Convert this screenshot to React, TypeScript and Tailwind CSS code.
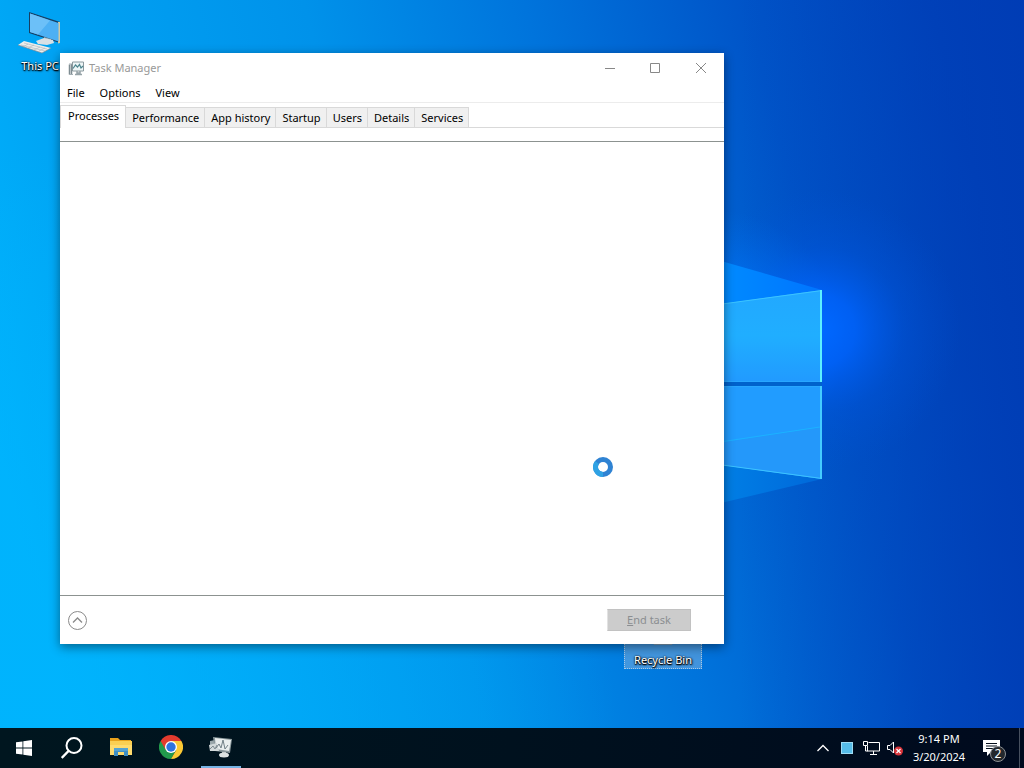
import { useState } from "react";
import type { ReactNode } from "react";

const TABS = ["Processes", "Performance", "App history", "Startup", "Users", "Details", "Services"];
const MENUS = ["File", "Options", "View"];

function Wallpaper() {
  return (
    <svg
      className="absolute inset-0 h-full w-full"
      viewBox="0 0 1024 768"
      preserveAspectRatio="xMidYMid slice"
      aria-hidden="true"
    >
      <defs>
        <linearGradient id="sky" gradientUnits="userSpaceOnUse" x1="-110" y1="16" x2="980" y2="-260">
          <stop offset="0" stopColor="#00b2fc" />
          <stop offset="0.12" stopColor="#00a4f4" />
          <stop offset="0.36" stopColor="#0092ea" />
          <stop offset="0.55" stopColor="#0074dc" />
          <stop offset="0.74" stopColor="#0054c8" />
          <stop offset="0.9" stopColor="#0044bc" />
          <stop offset="1" stopColor="#003eb8" />
        </linearGradient>
        <linearGradient id="shade" gradientUnits="userSpaceOnUse" x1="740" y1="0" x2="1024" y2="0">
          <stop offset="0" stopColor="#003cb4" stopOpacity="0" />
          <stop offset="0.5" stopColor="#003cb4" stopOpacity="0.3" />
          <stop offset="1" stopColor="#003cb4" stopOpacity="0.8" />
        </linearGradient>
        <radialGradient id="corner" gradientUnits="userSpaceOnUse" cx="0" cy="768" r="620">
          <stop offset="0" stopColor="#00b4fd" stopOpacity="0.9" />
          <stop offset="1" stopColor="#00b4fd" stopOpacity="0" />
        </radialGradient>
        <radialGradient id="glow" gradientUnits="userSpaceOnUse" cx="820" cy="330" r="140">
          <stop offset="0" stopColor="#0068ff" />
          <stop offset="0.25" stopColor="#0064ff" stopOpacity="0.8" />
          <stop offset="0.6" stopColor="#005ae8" stopOpacity="0.3" />
          <stop offset="1" stopColor="#0054d8" stopOpacity="0" />
        </radialGradient>
        <radialGradient id="glowLeft" gradientUnits="userSpaceOnUse" cx="715" cy="340" r="130">
          <stop offset="0" stopColor="#0090ff" />
          <stop offset="0.5" stopColor="#0080ff" stopOpacity="0.6" />
          <stop offset="1" stopColor="#0070e8" stopOpacity="0" />
        </radialGradient>
        <linearGradient id="beamTop" x1="0" y1="0" x2="1" y2="0">
          <stop offset="0" stopColor="#0090ff" />
          <stop offset="1" stopColor="#0074ff" />
        </linearGradient>
        <linearGradient id="beamBottom" x1="0" y1="0" x2="1" y2="0">
          <stop offset="0" stopColor="#0084e8" />
          <stop offset="1" stopColor="#0068da" />
        </linearGradient>
        <linearGradient id="paneTop" x1="0" y1="0" x2="0" y2="1">
          <stop offset="0" stopColor="#22a8ff" />
          <stop offset="0.5" stopColor="#20aeff" />
          <stop offset="1" stopColor="#219aff" />
        </linearGradient>
      </defs>
      <rect width="1024" height="768" fill="url(#sky)" />
      <rect width="1024" height="768" fill="url(#corner)" />
      <rect width="1024" height="768" fill="url(#shade)" />
      <rect width="1024" height="768" fill="url(#glowLeft)" />
      <rect width="1024" height="768" fill="url(#glow)" />
      <path d="M700 255 822 290 700 308Z" fill="url(#beamTop)" />
      <path d="M700 462 822 479 700 508Z" fill="url(#beamBottom)" />
      <path d="M700 380h122v8H700z" fill="#0062cc" />
      <path d="M700 307 822 290v92H700z" fill="url(#paneTop)" />
      <path d="M700 386h122v93l-122-17z" fill="#219cff" />
      <path d="M700 446 822 427v52l-122-17z" fill="#2498fa" />
      <path d="M700 445 820 427" stroke="#1cb2ff" />
      <path d="M700 307 822 290.500M700 462l122 16.500" fill="none" stroke="#3cc4ff" />
      <path d="M700 381.500h120M700 386.500h120" stroke="#28a6ff" />
      <path d="M821 290v92" stroke="#5cf0ff" strokeWidth="2" />
      <path d="M821 386v93" stroke="#44ccff" strokeWidth="2" />
    </svg>
  );
}

function PcIcon() {
  return (
    <svg width="44" height="42" viewBox="0 0 44 42" aria-hidden="true">
      <path d="M11 0 42 10v21L11 21z" fill="#173f63" />
      <path d="M42 10v21l-2 .5V10z" fill="#cfc9a6" />
      <path d="M12 1.500 40.500 11v18.500L12 20z" fill="#4db0f4" />
      <path d="M12 1.500 32 8.500 20 22.500 12 20z" fill="#6cc0f8" />
      <path d="m26 25 7 2v3l-7-1z" fill="#90a7b5" />
      <path d="m18 29 8-3 9 2 1 3-7 2-9-1z" fill="#d8e0e5" />
      <path d="m0 33 6-4 27 7-9 5z" fill="#ededeb" />
      <path d="m3 33 24 6M6 31l23 6M10 32l-5 3M16 33l-6 3M22 35l-6 3M27 36l-6 3" stroke="#a9b3ba" strokeWidth=".6" />
      <path d="m0 33 24 8 9-5" fill="none" stroke="#7c8b96" strokeWidth=".7" />
    </svg>
  );
}

function BinIcon() {
  return (
    <svg width="36" height="40" viewBox="0 0 36 44" aria-hidden="true">
      <path d="M4 6h28l-4 36H8z" fill="#dfe7ec" stroke="#8d9ba5" />
      <path d="M4 6 18 1l14 5-14 4z" fill="#f5f8fa" stroke="#8d9ba5" />
    </svg>
  );
}

function TitleIcon() {
  return (
    <svg width="17" height="16" viewBox="0 0 17 16" fill="none" aria-hidden="true">
      <path d="M1.500 4.500v10M3.500 4v10" stroke="#7e8c92" strokeWidth="1.500" />
      <path d="M1 4h3M1 14.500h4" stroke="#a4afb4" />
      <path d="M4.500 2h11v9h-11z" fill="#edf5f6" stroke="#8b999e" />
      <path d="M5 8.500 7.500 5 9.500 7l2-2.500L13 8l2-2" stroke="#4e858e" strokeWidth="1.200" />
      <path d="M9 11v2h3v-2M7 14.500h7" stroke="#96a3a8" strokeWidth="1.500" />
    </svg>
  );
}

function FolderIcon() {
  return (
    <svg width="22" height="18" viewBox="0 0 22 18" aria-hidden="true">
      <path d="M0 0h8l2 2h11v4H0z" fill="#e8a21c" />
      <path d="M0 3h22v14H0z" fill="#ffdb6e" />
      <path d="M0 3h22v4H0z" fill="#fbcf53" />
      <path d="M4 10h14v8h-4v-4H8v4H4z" fill="#3f8fc4" />
      <path d="M4 10h14v3H4z" fill="#55a2d2" />
    </svg>
  );
}

function ChromeIcon() {
  return (
    <svg width="24" height="24" viewBox="0 0 24 24" aria-hidden="true">
      <path d="M1.600 6A12 12 0 0 0 12 24l5.200-9L12 12Z" fill="#229a4c" />
      <path d="M22.400 6A12 12 0 0 1 12 24l5.200-9L12 6Z" fill="#fcc934" />
      <path d="M12 6h10.400A12 12 0 0 0 1.600 6l5.200 9Z" fill="#e33b2e" />
      <circle cx="12" cy="12" r="6" fill="#fff" />
      <circle cx="12" cy="12" r="4.700" fill="#2f73e0" />
    </svg>
  );
}

function TaskManagerIcon() {
  return (
    <svg width="24" height="22" viewBox="0 0 24 22" aria-hidden="true">
      <path d="m1 5 5-1v11H1z" fill="#9aa7ab" />
      <path d="m4 1 19 2-2 14-15-2z" fill="#8a989c" />
      <path d="m6 2 16 2-2 11-13-2z" fill="#e9eeee" />
      <path d="m0 9 8-2 2 8H1z" fill="#d3dadb" />
      <path d="m7 12 3-4 2 4 2-8 2 9 3-4" fill="none" stroke="#718087" />
      <path d="m1 13 3-3 2 3 2-4" fill="none" stroke="#7d8b91" />
      <path d="M13 16h4v3h-4z" fill="#b7c0c2" />
      <ellipse cx="15" cy="19" rx="5" ry="2.500" fill="#dde2e2" />
    </svg>
  );
}

function DesktopIcon({ label, children, className }: { label: string; children: ReactNode; className: string }) {
  return (
    <button
      className={
        "absolute flex flex-col items-center leading-4 text-white [text-shadow:1px_1px_2px_#000,0_1px_1px_#000,0_0_2px_#000] " +
        className
      }
    >
      {children}
      <span className="whitespace-nowrap">{label}</span>
    </button>
  );
}

function TaskManager() {
  const [tab, setTab] = useState("Processes");

  return (
    <section
      aria-label="Task Manager"
      className="absolute top-[53px] right-[300px] bottom-[84px] left-[60px] flex flex-col bg-white shadow-[0_3px_10px_rgba(0,0,0,0.45)]"
    >
      <header className="flex h-[30px] shrink-0 items-center pl-2 text-[#999]">
        <TitleIcon />
        <h1 className="ml-1 flex-1">Task Manager</h1>
        <div className="flex h-7">
          <button aria-label="Minimize" className="flex w-[45px] items-center justify-center">
            <svg width="10" height="10" stroke="#888"><path d="M0 5.500h10" /></svg>
          </button>
          <button aria-label="Maximize" className="flex w-[46px] items-center justify-center">
            <svg width="10" height="10" fill="none" stroke="#888"><path d="M.5.500h9v9h-9z" /></svg>
          </button>
          <button aria-label="Close" className="flex w-[46px] items-center justify-center">
            <svg width="10" height="10" stroke="#888"><path d="m0 0 10 10M10 0 0 10" /></svg>
          </button>
        </div>
      </header>

      <nav className="flex h-5 shrink-0 items-center gap-[15px] border-b border-[#ececec] pt-0.5 pl-[7px] text-black">
        {MENUS.map((m) => (
          <button key={m}>{m}</button>
        ))}
      </nav>

      <div role="tablist" className="flex h-[25px] shrink-0 items-end border-b border-[#d9d9d9] text-black">
        {TABS.map((t) => (
          <button
            key={t}
            role="tab"
            aria-selected={t === tab}
            onClick={() => setTab(t)}
            className={
              t === tab
                ? "-mb-px h-[23px] border-x border-t border-[#d9d9d9] bg-white pr-1.5 pb-0.5 pl-[7px]"
                : "h-5 border-t border-r border-[#d9d9d9] bg-[#f0f0f0] pt-px pr-[5px] pl-1.5"
            }
          >
            {t}
          </button>
        ))}
      </div>

      <div role="tabpanel" aria-label={tab} className="mt-[13px] min-h-0 flex-1 border-y border-[#8c9290]" />

      <footer className="flex h-12 shrink-0 items-center justify-between pr-[33px] pl-2">
        <button aria-label="Fewer details">
          <svg width="19" height="19" viewBox="0 0 19 19" fill="none" stroke="#8a8a8a">
            <circle cx="9.500" cy="9.500" r="9" />
            <path d="m5 11.500 4.500-4.500 4.500 4.500" strokeWidth="1.300" />
          </svg>
        </button>
        <button
          disabled
          className="h-[22px] w-[84px] border border-[#c2c2c2] border-l-[#e2e2e2] bg-[#cccccc] text-[#8b8e91]"
        >
          <span className="underline">E</span>nd task
        </button>
      </footer>
    </section>
  );
}

function TaskButton({ label, active, children }: { label: string; active?: boolean; children: ReactNode }) {
  return (
    <button aria-label={label} className="flex w-[50px] justify-center">
      <span
        className={
          "flex h-full w-10 items-center justify-center border-b-2 " +
          (active ? "border-[#76b3e4]" : "border-transparent")
        }
      >
        {children}
      </span>
    </button>
  );
}

function Taskbar() {
  return (
    <footer className="relative flex h-10 shrink-0 bg-linear-to-r from-[#00161f] via-[#00111e] to-[#000a1e] text-white">
      <button aria-label="Start" className="flex w-12 items-center justify-center">
        <svg width="16" height="16" viewBox="0 0 16 16" fill="#fff">
          <path d="M0 2.300 6.500 1.400v6.200H0zM7.300 1.200 16 0v7.600H7.300zM0 8.400h6.500v6.200L0 13.700zM7.300 8.400H16V16l-8.700-1.200z" />
        </svg>
      </button>
      <button aria-label="Search" className="flex w-12 items-center justify-center">
        <svg width="22" height="22" viewBox="0 0 22 22" fill="none" stroke="#fff" strokeWidth="2">
          <circle cx="13" cy="8.500" r="7.500" />
          <path d="M7.500 14 .700 21" strokeWidth="2.500" />
        </svg>
      </button>
      <TaskButton label="File Explorer"><FolderIcon /></TaskButton>
      <TaskButton label="Google Chrome"><ChromeIcon /></TaskButton>
      <TaskButton label="Task Manager" active><TaskManagerIcon /></TaskButton>

      <div className="ml-auto flex">
        <button aria-label="Show hidden icons" className="flex w-6 items-center justify-center">
          <svg width="12" height="8" fill="none" stroke="#fff" strokeWidth="1.300"><path d="M.5 7 6 1.500 11.500 7" /></svg>
        </button>
        <button aria-label="Tray app" className="flex w-6 items-center justify-center">
          <span className="size-3 border border-[#9fdcf4] bg-[#56bce8]" />
        </button>
        <button aria-label="Network" className="flex w-6 items-center justify-center">
          <svg width="17" height="14" viewBox="0 0 17 14" fill="none" stroke="#fff">
            <path d="M5.500 1.500h11v8.500h-12V5M10.500 10v3M7 13.500h7" />
            <path d="M.5.500h4v4h-4zM2.500 4.500V10H5" />
          </svg>
        </button>
        <button aria-label="Volume muted" className="flex w-6 items-center justify-center">
          <svg width="17" height="16" viewBox="0 0 17 16" fill="none">
            <path d="M.5 5.500H3L6.500 2v11L3 9.500H.5z" stroke="#fff" />
            <circle cx="11.500" cy="11" r="4.500" fill="#d8343a" />
            <path d="m9.500 9 4 4m0-4-4 4" stroke="#fff" strokeWidth="1.200" />
          </svg>
        </button>
        <button className="flex w-16 flex-col items-center justify-center leading-[18px]">
          <span>9:14 PM</span>
          <span>3/20/2024</span>
        </button>
        <button aria-label="Notifications" className="relative flex w-12 items-center justify-center pr-2">
          <svg width="17" height="16" viewBox="0 0 17 16">
            <path d="M0 0h17v12H8l-4 4v-4H0z" fill="#fff" />
            <path d="M3 3.500h11M3 6h11M3 8.500h8" stroke="#06101c" />
          </svg>
          <span className="absolute top-[18px] left-[19px] flex size-4 items-center justify-center rounded-full border border-[#8c9094] bg-[#23282d] text-xs">
            2
          </span>
        </button>
        <button aria-label="Show desktop" className="w-[5px] border-l border-[#47505f]" />
      </div>
    </footer>
  );
}

export default function App() {
  return (
    <div className="relative flex h-screen flex-col overflow-hidden bg-[#0078d7] font-['Noto_Sans','Open_Sans',sans-serif] text-[11px]">
      <Wallpaper />
      <main className="relative flex-1">
        <DesktopIcon label="This PC" className="top-3 left-[18px] w-11 gap-1">
          <PcIcon />
        </DesktopIcon>
        <DesktopIcon
          label="Recycle Bin"
          className="right-[322px] bottom-[59px] w-[78px] gap-1.5 border border-dotted border-[#a8c8e4] bg-[#5ea2de]/70"
        >
          <BinIcon />
        </DesktopIcon>
        <TaskManager />
        <svg className="absolute top-[457px] left-[593px]" width="20" height="20" role="img" aria-label="Busy">
          <circle cx="10" cy="10" r="7.500" fill="none" stroke="#2f83d3" strokeWidth="5" />
          <path d="M10 17.500A7.500 7.500 0 0 1 4 5.500" fill="none" stroke="#2fa2e4" strokeWidth="5" />
        </svg>
      </main>
      <Taskbar />
    </div>
  );
}
